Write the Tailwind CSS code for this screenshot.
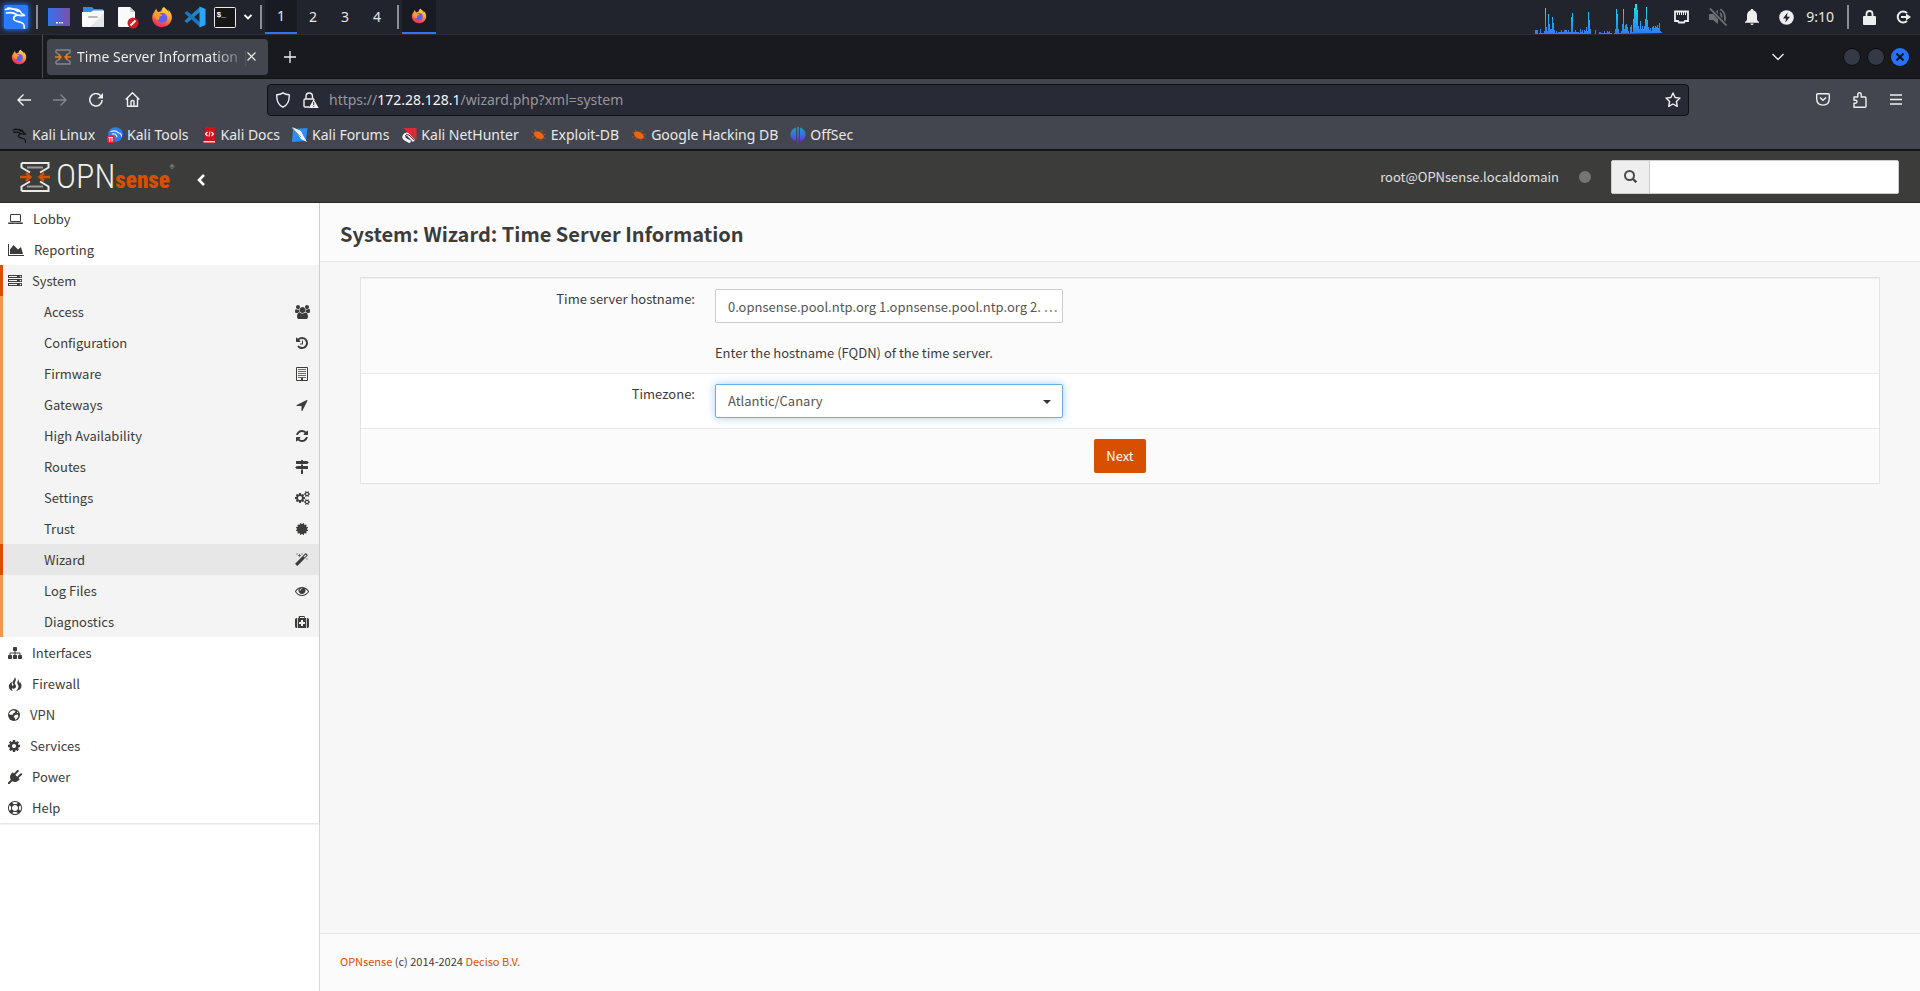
<!DOCTYPE html>
<html lang="en">
<head>
<meta charset="utf-8">
<meta name="viewport" content="width=device-width, initial-scale=1">
<title>Time Server Information | Wizard | System | OPNsense.localdomain</title>
<script src="https://cdn.jsdelivr.net/npm/@tailwindcss/browser@4"></script>
</head>
<body class="flex min-h-screen flex-col bg-[#f7f7f7] font-['Noto_Sans','Open_Sans',sans-serif] text-sm text-[#e8e8e8]">

<!-- Shared symbols -->
<svg class="absolute h-0 w-0" aria-hidden="true">
  <defs>
    <linearGradient id="ffOuter" x1="0.7" y1="0" x2="0.3" y2="1"><stop offset="0" stop-color="#ffe14d"/><stop offset="0.45" stop-color="#ff9a2e"/><stop offset="0.8" stop-color="#ff4050"/><stop offset="1" stop-color="#e62a70"/></linearGradient>
    <linearGradient id="ffGlobe" x1="0" y1="0" x2="0" y2="1"><stop offset="0" stop-color="#7a52e8"/><stop offset="1" stop-color="#4a6cf5"/></linearGradient>
    <linearGradient id="deskGrad" x1="0" y1="0" x2="1" y2="0"><stop offset="0" stop-color="#3574f0"/><stop offset="1" stop-color="#7a4fa8"/></linearGradient>
    <linearGradient id="offGrad" x1="0" y1="0" x2="0" y2="1"><stop offset="0" stop-color="#18a4c0"/><stop offset="0.5" stop-color="#3a6fe0"/><stop offset="1" stop-color="#7420d8"/></linearGradient>
    <linearGradient id="cpuGrad" gradientUnits="userSpaceOnUse" x1="0" y1="0" x2="0" y2="31"><stop offset="0" stop-color="#10f0e0"/><stop offset="1" stop-color="#2f78ff"/></linearGradient>
  </defs>
  <symbol id="firefox" viewBox="0 0 24 24">
    <path d="M21.500 7.500C20.800 6 19.600 4.600 18.500 4c.7 1.200 1 2.200 1.100 3C18 3.600 15.200 2.700 14.200 1c-1.800 1-2.900 3-3 4.600-1.200.1-2.200.5-3.100 1.100C6.800 6.200 6 4.500 6 3c-1.200.8-1.900 2.200-2.200 3.400C2.200 8 1.300 10.300 1.300 12.500 1.300 18.600 6.100 23 12 23s10.800-4.700 10.800-10.700c0-1.800-.5-3.500-1.300-4.800z" fill="url(#ffOuter)"/>
    <circle cx="12.300" cy="13" r="5.400" fill="url(#ffGlobe)"/>
    <path d="M3.500 9.500c2-1.500 4.500-1.800 6.500-.8.700.4 2.500.5 2.500 1.100 0 1-2.800 1.200-3.200 2-.4 1 .3 2.400-.8 3.200C6 15 3.600 12.500 3.500 9.500z" fill="#ff9a2e"/>
  </symbol>
  <symbol id="dragon" viewBox="0 0 24 24">
    <path d="M1.500 4.500c5-1.700 9.500-.8 12.500 1.800M2.500 8c4-.7 7.500-.3 10 1.500M11 4c3 .3 5.500 2 6.500 4.500l3 2-3.500.2c-3.500-1.500-7.500.2-7.300 3 .2 3.300 6.800 2.300 9.300 4.800 1.200 1.200 1.500 2.500 1.200 4.500M4 3l4 .5" fill="none" stroke="currentColor" stroke-width="1.700" stroke-linecap="round" stroke-linejoin="round"/>
  </symbol>
  <symbol id="bug" viewBox="0 0 16 16">
    <path d="M3.500 5C6 4 9 4.500 11 6.500c1.300 1.300 2.300 3 1.800 4.200-1 1.800-5.300 1.700-7.500-.2C3.300 9 2.300 6.500 3.500 5z" fill="#f0640f"/>
    <path d="M2.500 6.500L1 4.500M5 5L4 2.500M9 5.500l3-2.500M12 8l3-1M3.500 9L1 10.500M6 11l-2.500 2M9.500 11.500l.5 2.500M13 10.500l2 1.500" stroke="#b5571d" stroke-width=".8" fill="none"/>
  </symbol>
  <symbol id="opn-mark" viewBox="0 0 30 30">
    <path d="M1.500 1h27v4.500L20 10.500M1.500 1v4.500L10 10.500M1.500 29h27v-4.500L20 19.500M1.500 29v-4.500L10 19.500" fill="none" stroke="#e9e9e9" stroke-width="2"/>
    <path d="M7 5.500h16M7 24.500h16" stroke="#9a9a99" stroke-width="2"/>
    <path d="M0 15h9M6 11l4.500 4L6 19M30 15h-9M24 11l-4.500 4 4.500 4" fill="none" stroke="#d94f00" stroke-width="2.400"/>
  </symbol>
  <symbol id="opn-tab" viewBox="0 0 16 16">
    <path d="M1 1h14v2.500L11 6M1 1v2.500L5 6M1 15h14v-2.500L11 10M1 15v-2.500L5 10" fill="none" stroke="#85878b" stroke-width="1.400"/>
    <path d="M0 8h5M3.500 5.500L6 8l-2.500 2.500M16 8h-5M12.500 5.500L10 8l2.500 2.500" fill="none" stroke="#f07a10" stroke-width="1.500"/>
  </symbol>
</svg>

<!-- Desktop panel -->
<header class="flex h-[35px] shrink-0 items-center justify-between border-b border-[#2b2c34] bg-[#22242d] pl-1">
  <div class="flex h-full items-center">
    <button type="button" aria-label="Applications" class="flex h-6 w-6 items-center justify-center rounded-xs bg-[#2a7bff] text-white shadow-[0_0_5px_1px_#1f6bf0]"><svg class="h-6 w-6"><use href="#dragon"/></svg></button>
    <span class="ml-2 h-6 w-0.5 bg-[#8d8e92]"></span>
    <button type="button" aria-label="Show desktop" class="ml-2.5"><svg class="h-[18px] w-[22px]" viewBox="0 0 22 18"><path fill="url(#deskGrad)" d="M0 0h22v18H0z"/><path d="M8 14h2v1.500H8zM11 14h1.500v1.500H11zM13.500 14H15v1.500h-1.500z" fill="#fff"/></svg></button>
    <button type="button" aria-label="File manager" class="ml-3"><svg class="h-5 w-[22px]" viewBox="0 0 22 20"><path d="M1 0h9l2 2h9v5H1z" fill="#3b83ee"/><path d="M0 5h9l2-1.500h11V19q0 1-1 1H1q-1 0-1-1z" fill="#fafafa"/><path d="M22 6v13q0 1-1 1H8z" fill="#e6e6e6"/><rect x="6" y="9" width="10" height="2" rx="1" fill="#b9b9b9"/></svg></button>
    <button type="button" aria-label="Text editor" class="ml-3.5"><svg class="h-6 w-[21px]" viewBox="0 0 21 24"><path d="M1 2h11l5 5v15H1q-1 0-1-1V3q0-1 1-1z" fill="#fafafa"/><path d="M12 2v5h5z" fill="#cfcfcf"/><circle cx="15" cy="18" r="5.500" fill="#d61b22"/><path d="M12.500 20.500l5-5" stroke="#fff" stroke-width="1.800"/></svg></button>
    <button type="button" aria-label="Firefox" class="ml-3"><svg class="h-[22px] w-[22px]"><use href="#firefox"/></svg></button>
    <button type="button" aria-label="Code editor" class="ml-[11px]"><svg class="h-[22px] w-[22px]" viewBox="0 0 22 22"><path d="M16 1L2 13.500 0.500 15 3 17 16 6z" fill="#1d85d0"/><path d="M16 21L2 8.500 0.500 7 3 5 16 16z" fill="#1678c2"/><path d="M15.500 0.500L21.500 3v16l-6 2.500z" fill="#2ea3f2"/></svg></button>
    <button type="button" aria-label="Terminal" class="ml-2"><svg class="h-[21px] w-[22px]" viewBox="0 0 22 21"><rect x=".5" y=".5" width="21" height="20" rx="1" fill="#161616" stroke="#ececec"/><text x="2.500" y="10" font-family="Liberation Mono" font-size="8" font-weight="700" fill="#fff">$_</text></svg></button>
    <button type="button" aria-label="More terminals" class="ml-2"><svg class="h-2 w-2" viewBox="0 0 8 8" fill="none" stroke="#fff" stroke-width="1.800"><path d="M.5 2L4 5.500 7.500 2"/></svg></button>
    <span class="ml-2 h-6 w-0.5 bg-[#8d8e92]"></span>
    <nav aria-label="Workspaces" class="ml-[3px] flex h-full">
      <button type="button" class="h-full w-8 border-b-2 border-[#2f74f0] bg-[#191b22]">1</button>
      <button type="button" class="w-8">2</button>
      <button type="button" class="w-8">3</button>
      <button type="button" class="w-8">4</button>
    </nav>
    <span class="ml-1 h-6 w-0.5 bg-[#8d8e92]"></span>
    <button type="button" aria-label="Firefox window" class="ml-[3px] flex h-full w-[34px] items-center justify-center border-b-2 border-[#2f74f0] bg-[#191b22]"><svg class="h-4 w-4"><use href="#firefox"/></svg></button>
  </div>
  <div class="flex h-full items-center">
    <svg class="mt-[3px] h-[31px] w-32 self-start" viewBox="0 0 128 31" aria-label="CPU graph" fill="url(#cpuGrad)"><path d="M0 31V27h3v4zM4 31v-1h1v-4h1v4h3v-2h1V5h1v19h1v4h1V11h1v10h1v5h2V14h1v6h1v7h1v3h1v-2h1v2h1v-1h3v-2h1v2h2v-2h3v2h1v-2h1v-4h0v6h2V14h1v-4h1v19h2v-2h1v2h3v1h1v-4h1v3h1v-2h1v3h1v-3h1v1h1v-4h1v4h1V9h1v8h1v9h1v5zM60 31v-4h1v4zM64 31v-2h2v1h3v-2h1v2h2v-2h1v1h1v-1h1v2h2v1zM79 31v-1h1v-4h1V6h1v5h1v15h1v4h2v-2h1V21h1V6h1v20h1v-4h1v-1h1v3h1v4h1v2h1v-6h1v-2h1v7h1V16h1V5h1V1h1v0h1v6h1v16h1v3h1v-8h1v8h1v-3h1v3h1v-3h1v-7h1V4h1v13h1v7h1v3h1v-2h1v3h1v-4h1v-1h1v2h1v-2h1v1h1v-2h1v3h1v-5h1v8h1v1h1v1z"/></svg>
    <button type="button" aria-label="Network" class="ml-[11px]"><svg class="h-[14px] w-[15px]" viewBox="0 0 15 14"><path d="M1 1.500h13v9.500h-3l-1 1.500H5L4 11H1z" fill="none" stroke="#eee" stroke-width="1.800"/><path d="M3.500 2v3M5.500 2v3M7.500 2v3M9.500 2v3M11.500 2v3" stroke="#eee"/></svg></button>
    <button type="button" aria-label="Volume muted" class="ml-5"><svg class="h-[18px] w-[18px]" viewBox="0 0 18 18" fill="none" stroke="#6f7076"><path d="M0 6h4l5-4v14l-5-4H0z" fill="#6f7076" stroke="none"/><path d="M11 5c2 1.500 2 6 0 8M11 1.500c6 2 6 11 3 14" stroke-width="1.800"/><path d="M1 0l16.500 17.500" stroke="#22242d" stroke-width="3.500"/><path d="M1 .5l16.500 17" stroke-width="1.800"/></svg></button>
    <button type="button" aria-label="Notifications" class="ml-[18px]"><svg class="h-4 w-[14px]" viewBox="0 0 14 16" fill="#eee"><path d="M7 0c1 0 1.300.6 1.300 1.300C10.800 2 12 4 12 6.500V11l2 2v.7H0V13l2-2V6.500C2 4 3.200 2 5.700 1.300 5.700.6 6 0 7 0zM5.500 14.500h3Q8.500 16 7 16t-1.500-1.500z"/></svg></button>
    <button type="button" aria-label="Power manager" class="ml-5"><svg class="h-[15px] w-[15px]" viewBox="0 0 15 15"><circle cx="7.500" cy="7.500" r="7.300" fill="#eee"/><path d="M8.500 2.500l-4.500 6h3l-.7 4L11 6.700H8z" fill="#22242d"/></svg></button>
    <time class="ml-3">9:10</time>
    <span class="ml-[13px] h-6 w-0.5 bg-[#8d8e92]"></span>
    <button type="button" aria-label="Lock screen" class="ml-[14px]"><svg class="h-[15px] w-[13px]" viewBox="0 0 13 15"><path d="M3.500 7V4q0-3 3-3t3 3v3" fill="none" stroke="#eee" stroke-width="1.800"/><rect y="6" width="13" height="9" rx="1" fill="#eee"/></svg></button>
    <button type="button" aria-label="Log out" class="mr-[9px] ml-5"><svg class="h-[14px] w-[15px]" viewBox="0 0 15 14" fill="none" stroke="#eee" stroke-width="2"><path d="M11 3A5.500 5.500 0 1 0 11 11M5 7h7"/><path d="M10 3.500L15 7l-5 3.500z" fill="#eee" stroke="none"/></svg></button>
  </div>
</header>

<!-- Browser tabs -->
<div class="flex h-11 shrink-0 items-center border-b border-[#111216] bg-[#191a1f]">
  <button type="button" aria-label="Firefox View" class="flex h-full w-[43px] items-center justify-center border-r border-[#4a4b50] pr-1"><svg class="h-4 w-4"><use href="#firefox"/></svg></button>
  <div class="ml-1 flex h-9 w-[221px] items-center rounded-sm bg-[#43464e] pl-2 text-[#f2f2f2]">
    <svg class="h-4 w-4 shrink-0"><use href="#opn-tab"/></svg>
    <span class="ml-1.5 w-[169px] bg-linear-to-r from-[#f2f2f2] from-80% to-[#55575e] bg-clip-text whitespace-nowrap text-transparent">Time Server Information |</span>
    <button type="button" aria-label="Close tab" class="ml-px"><svg class="h-[9px] w-[9px]" viewBox="0 0 9 9" stroke="#e8e8e8" stroke-width="1.200"><path d="M.5.5l8 8M8.500.5l-8 8"/></svg></button>
  </div>
  <button type="button" aria-label="New tab" class="ml-4"><svg class="h-3 w-3" viewBox="0 0 12 12" stroke="#f2f2f2" stroke-width="1.300"><path d="M6 0v12M0 6h12"/></svg></button>
  <button type="button" aria-label="List all tabs" class="mr-[59px] ml-auto"><svg class="h-2 w-3" viewBox="0 0 12 8" fill="none" stroke="#e8e8e8" stroke-width="1.400"><path d="M.5 1L6 6.500 11.500 1"/></svg></button>
  <div class="mr-[11px] flex items-center gap-1.5">
    <button type="button" aria-label="Minimize" class="h-[18px] w-[18px] rounded-full border border-[#0b0c0f] bg-[#343945]"></button>
    <button type="button" aria-label="Maximize" class="h-[18px] w-[18px] rounded-full border border-[#0b0c0f] bg-[#343945]"></button>
    <button type="button" aria-label="Close window" class="flex h-[18px] w-[18px] items-center justify-center rounded-full bg-[#2672f5]"><svg class="h-2 w-2" viewBox="0 0 8 8" stroke="#10131c" stroke-width="2"><path d="M.5.5l7 7M7.500.5l-7 7"/></svg></button>
  </div>
</div>

<!-- Navigation toolbar -->
<div class="flex h-[41px] shrink-0 items-center bg-[#43464e]">
  <div class="flex w-[267px] shrink-0 items-center gap-[22px] pl-[17px]">
    <button type="button" aria-label="Back"><svg class="h-[14px] w-[14px]" viewBox="0 0 14 14" fill="none" stroke="#f0f0f0" stroke-width="1.400"><path d="M14 7H1M6.500 1.500L1 7l5.500 5.500"/></svg></button>
    <button type="button" aria-label="Forward" disabled><svg class="h-[14px] w-[14px]" viewBox="0 0 14 14" fill="none" stroke="#85878c" stroke-width="1.400"><path d="M0 7h13M7.500 1.500L13 7l-5.500 5.500"/></svg></button>
    <button type="button" aria-label="Reload"><svg class="h-[14px] w-[14px]" viewBox="0 0 14 14" fill="none" stroke="#f0f0f0" stroke-width="1.500"><path d="M11.500 2.500A6.200 6.200 0 1 0 13.200 7"/><path d="M14 0v5.500H8.500z" fill="#f0f0f0" stroke="none"/></svg></button>
    <button type="button" aria-label="Home"><svg class="h-[15px] w-[15px]" viewBox="0 0 15 15" fill="none" stroke="#f0f0f0" stroke-width="1.400" stroke-linejoin="round"><path d="M.7 7.500l6.800-6.800 6.800 6.800M2.500 6v8.300h10V6M6 14v-4.500q0-1 1.500-1T9 9.500V14"/></svg></button>
  </div>
  <div class="flex h-8 min-w-0 flex-1 items-center rounded-sm border border-[#0e0f13] bg-[#282a35] pr-[7px] pl-2">
    <svg class="h-4 w-[14px] shrink-0" viewBox="0 0 14 16" fill="none" stroke="#f0f0f0" stroke-width="1.400"><path d="M7 .8q2.500 1.700 6.200 2C13.600 9 11.500 13 7 15.200 2.500 13 .4 9 .8 2.800 4.500 2.500 7 .8 7 .8z"/></svg>
    <svg class="ml-[13px] h-4 w-4 shrink-0" viewBox="0 0 16 16"><path d="M3 7V4.500Q3 1 6.200 1T9.500 4.500V7M6 15H2.300Q1 15 1 13.800V8.200Q1 7 2.300 7h8Q11 7 11 8" fill="none" stroke="#f0f0f0" stroke-width="1.400"/><path d="M10.700 7.300l5 8.700H5.700z" fill="#f0f0f0"/><path d="M10.200 10h1v3h-1zM10.200 13.800h1v1h-1z" fill="#282a35"/></svg>
    <div role="textbox" aria-label="Address" class="ml-2.5 flex-1 text-[#96979c]">https://<span class="text-[#f5f5f5]">172.28.128.1</span>/wizard.php?xml=system</div>
    <button type="button" aria-label="Bookmark this page"><svg class="h-4 w-4" viewBox="0 0 16 16" fill="none" stroke="#f0f0f0" stroke-width="1.400" stroke-linejoin="round"><path d="M8 1l2.100 4.500 4.900.6-3.600 3.400.9 4.900L8 12l-4.300 2.400.9-4.900L1 6.100l4.900-.6z"/></svg></button>
  </div>
  <div class="flex w-[231px] shrink-0 items-center justify-end gap-[23px] pr-[18px]">
    <button type="button" aria-label="Pocket"><svg class="h-[13px] w-[14px]" viewBox="0 0 14 13" fill="none" stroke="#f0f0f0" stroke-width="1.400"><path d="M1.700.8h10.600q1 0 1 1v4q0 6.300-6.300 6.300T.7 5.800v-4q0-1 1-1z"/><path d="M4 4.500l3 2.800 3-2.800"/></svg></button>
    <button type="button" aria-label="Extensions"><svg class="h-4 w-[14px]" viewBox="0 0 14 16" fill="none" stroke="#f0f0f0" stroke-width="1.400" stroke-linejoin="round"><path d="M1 5h3.800V2.500q0-1.700 1.700-1.700t1.700 1.700V5H12q1 0 1 1v8q0 1.200-1 1.200H1v-4h1.500q1.500 0 1.500-1.400T2.500 8.300H1z"/></svg></button>
    <button type="button" aria-label="Menu"><svg class="h-[11px] w-3" viewBox="0 0 12 11" stroke="#f0f0f0" stroke-width="1.400"><path d="M0 1h12M0 5.500h12M0 10h12"/></svg></button>
  </div>
</div>

<!-- Bookmarks bar -->
<nav aria-label="Bookmarks" class="flex h-[31px] shrink-0 items-center gap-3 border-b-2 border-[#141517] bg-[#43464e] pl-3 whitespace-nowrap">
  <a href="#" class="flex items-center gap-1"><svg class="h-4 w-4 text-[#101010]"><use href="#dragon"/></svg>Kali Linux</a>
  <a href="#" class="flex items-center gap-1"><svg class="h-4 w-4" viewBox="0 0 16 16"><circle cx="8.500" cy="7.500" r="7.300" fill="#2f7df5"/><path d="M3.500 4.500q5-2 8 1.500 3 0 3 3.500M5 7q4-1 5 3" fill="none" stroke="#dfeaff" stroke-width="1.200"/><rect y="8.500" width="7.500" height="7.500" rx="2" fill="#e32636"/><path d="M1.500 10.500h4.500M2.700 10.500v4M5 10.500v4" stroke="#fff"/></svg>Kali Tools</a>
  <a href="#" class="flex items-center gap-1"><svg class="h-4 w-4" viewBox="0 0 16 16"><path d="M2 0h12v16H2z" fill="#d41116"/><path d="M2 0h1.500v16H2z" fill="#3d3a6c"/><path d="M2.500 14H14v1.500H2.500z" fill="#f4d3d3"/><path d="M6.500 5l-2 2 2 2M10.500 5l2 2-2 2M9 4.500l-1 5" fill="none" stroke="#fff" stroke-width="1.100"/></svg>Kali Docs</a>
  <a href="#" class="flex items-center gap-1"><svg class="h-4 w-4" viewBox="0 0 16 16"><path d="M1 2l14.500-1L14 14 0 15z" fill="#2b8df5"/><path d="M0 0l9 4 3 6 3 5-6-3-4-6z" fill="#f2f5f8"/><path d="M0 1l9 9" stroke="#8f979e" stroke-width=".8"/></svg>Kali Forums</a>
  <a href="#" class="flex items-center gap-1"><svg class="h-4 w-4" viewBox="0 0 16 16"><path d="M2 1h13.500v12z" fill="#e32636"/><path d="M13 14L7.500 8Q5 6 3.300 8.500T5.500 13l4 2" fill="none" stroke="#f4f4f4" stroke-width="3"/><path d="M13 13L8 8Q5.500 6.500 4 9" fill="none" stroke="#a51724" stroke-width="1"/></svg>Kali NetHunter</a>
  <a href="#" class="flex items-center gap-1"><svg class="h-4 w-4"><use href="#bug"/></svg>Exploit-DB</a>
  <a href="#" class="flex items-center gap-1"><svg class="h-4 w-4"><use href="#bug"/></svg>Google Hacking DB</a>
  <a href="#" class="flex items-center gap-1"><svg class="h-4 w-4" viewBox="0 0 16 16" fill="url(#offGrad)"><path d="M6 .5v14Q.5 12.500.5 7.500T6 .5zM10 .5v14q5.500-2 5.500-7T10 .5zM7.200 0h1.600v16H7.200z"/></svg>OffSec</a>
</nav>

<!-- OPNsense page -->
<div class="flex flex-1 flex-col font-['Noto_Sans_CJK_SC','Open_Sans',sans-serif] text-[13px]/5 text-[#3c3c3b]">
  <header class="flex h-[52px] shrink-0 items-center justify-between border-b border-[#2a2a29] bg-[#3c3c3b] pr-[21px] pl-5">
    <div class="flex items-center">
      <a href="#" aria-label="OPNsense" class="flex items-center gap-1.5 font-['Roboto_Condensed','Roboto',sans-serif]">
        <svg class="h-[30px] w-[30px]"><use href="#opn-mark"/></svg>
        <span class="flex items-baseline pt-1"><span class="text-[34px]/8 font-light text-[#efefef]">OPN</span><span class="text-[23px]/8 font-black text-[#d94f00]">sense</span><sup class="self-start text-[6px]/5 text-[#aaaaaa]">®</sup></span>
      </a>
      <button type="button" aria-label="Toggle sidebar" class="mt-1.5 ml-[22px]"><svg class="h-3 w-2" viewBox="0 0 8 12" fill="none" stroke="#fff" stroke-width="2.600"><path d="M7 1L2 6l5 5"/></svg></button>
    </div>
    <div class="flex items-center">
      <span class="text-[#e0e0e0]">root@OPNsense.localdomain</span>
      <span class="mx-5 h-3 w-3 rounded-full bg-[#757575]"></span>
      <form role="search" class="flex h-[34px] w-72 overflow-hidden rounded-xs border border-[#cccccc] bg-white">
        <label for="search" class="flex w-[38px] shrink-0 items-center justify-center border-r border-[#cccccc] bg-[#eeeeee]"><svg class="h-[13px] w-[13px]" viewBox="0 0 13 13" fill="none" stroke="#4a4a4a" stroke-width="2"><circle cx="5.500" cy="5.500" r="4.500"/><path d="M9 9l3.300 3.300" stroke-width="2.400"/></svg></label>
        <input id="search" type="search" aria-label="Search" class="min-w-0 flex-1 px-3 outline-none">
      </form>
    </div>
  </header>

  <div class="flex flex-1">
    <aside class="w-80 shrink-0 border-r border-[#d9d9d9] bg-white">
      <nav aria-label="Main menu" class="shadow-[0_1px_2px_#00000026]">
        <a href="#" class="flex h-[31px] items-center gap-2.5 pl-2"><svg class="h-[14px] w-[15px]" viewBox="0 0 1920 1792" fill="currentColor"><path d="M416 1280q-66 0-113-47t-47-113v-704q0-66 47-113t113-47h1088q66 0 113 47t47 113v704q0 66-47 113t-113 47h-1088zm-32-864v704q0 13 9.500 22.500t22.500 9.500h1088q13 0 22.500-9.500t9.500-22.500v-704q0-13-9.500-22.500t-22.500-9.500h-1088q-13 0-22.500 9.500t-9.500 22.500zm1376 928h160v96q0 40-47 68t-113 28h-1600q-66 0-113-28t-47-68v-96h1760zm-720 96q16 0 16-16t-16-16h-160q-16 0-16 16t16 16h160z"/></svg>Lobby</a>
        <a href="#" class="flex h-[31px] items-center gap-2.5 pl-2"><svg class="h-[14px] w-4" viewBox="0 0 2048 1792" fill="currentColor"><path d="M2048 1536v128h-2048v-1536h128v1408h1920zm-384-1024l256 896h-1664v-576l448-576 576 576z"/></svg>Reporting</a>
        <a href="#" class="flex h-[31px] items-center gap-2.5 border-l-3 border-[#d94f00] bg-[#f4f4f4] pl-[5px]"><svg class="h-[14px] w-[14px]" viewBox="0 0 1792 1792" fill="currentColor"><path d="M128 1408h1024v-128h-1024v128zm0-512h1024v-128h-1024v128zm1568 448q0-40-28-68t-68-28-68 28-28 68 28 68 68 28 68-28 28-68zm-1568-960h1024v-128h-1024v128zm1568 448q0-40-28-68t-68-28-68 28-28 68 28 68 68 28 68-28 28-68zm0-512q0-40-28-68t-68-28-68 28-28 68 28 68 68 28 68-28 28-68zm96 832v384h-1792v-384h1792zm0-512v384h-1792v-384h1792zm0-512v384h-1792v-384h1792z"/></svg>System</a>
        <div class="bg-[#f4f4f4]">
          <a href="#" class="flex h-[31px] items-center justify-between border-l-3 border-[#f0984f] pr-2 pl-[41px]">Access<span class="flex w-[18px] justify-center"><svg class="h-[14px] w-[15px]" viewBox="0 0 1920 1792" fill="currentColor"><path d="M593 896q-162 5-265 128h-134q-82 0-138-40.500t-56-118.500q0-353 124-353 6 0 43.500 21t97.500 42.500 119 21.500q67 0 133-23-5 37-5 66 0 159 93 293zm1071 637q0 120-73 189.500t-194 69.500h-874q-121 0-194-69.500t-73-189.500q0-53 3.500-103.500t14-109 26.500-108.500 43-97.500 62-81 85.500-53.500 111.500-20q10 0 43 21.500t73 48 107 48 135 21.500 135-21.500 107-48 73-48 43-21.500q61 0 111.500 20t85.500 53.500 62 81 43 97.500 26.500 108.500 14 109 3.500 103.500zm-1024-1277q0 106-75 181t-181 75-181-75-75-181 75-181 181-75 181 75 75 181zm704 384q0 159-112.500 271.500t-271.500 112.500-271.500-112.500-112.500-271.500 112.500-271.500 271.500-112.500 271.500 112.500 112.500 271.500zm576 225q0 78-56 118.500t-138 40.500h-134q-103-123-265-128 93-134 93-293 0-29-5-66 66 23 133 23 59 0 119-21.500t97.500-42.500 43.500-21q124 0 124 353zm-128-609q0 106-75 181t-181 75-181-75-75-181 75-181 181-75 181 75 75 181z"/></svg></span></a>
          <a href="#" class="flex h-[31px] items-center justify-between border-l-3 border-[#f0984f] pr-2 pl-[41px]">Configuration<span class="flex w-[18px] justify-center"><svg class="h-[14px] w-[14px]" viewBox="0 0 1792 1792" fill="currentColor"><path d="M1664 896q0 156-61 298t-164 245-245 164-298 61q-172 0-327-72.500t-264-204.500q-7-10-6.500-22.500t8.500-20.500l137-138q10-9 25-9 16 2 23 12 73 95 179 147t225 52q104 0 198.500-40.500t163.500-109.500 109.500-163.500 40.500-198.500-40.500-198.500-109.500-163.500-163.500-109.500-198.500-40.500q-98 0-188 35.500t-160 101.500l137 138q31 30 14 69-17 40-59 40h-448q-26 0-45-19t-19-45v-448q0-42 40-59 39-17 69 14l130 129q107-101 244.500-156.500t284.500-55.500q156 0 298 61t245 164 164 245 61 298zm-640-288v448q0 14-9 23t-23 9h-320q-14 0-23-9t-9-23v-64q0-14 9-23t23-9h224v-352q0-14 9-23t23-9h64q14 0 23 9t9 23z"/></svg></span></a>
          <a href="#" class="flex h-[31px] items-center justify-between border-l-3 border-[#f0984f] pr-2 pl-[41px]">Firmware<span class="flex w-[18px] justify-center"><svg class="h-[14px] w-3" viewBox="0 0 12 14" fill="none" stroke="currentColor"><path d="M.5.500h11v13H.5z"/><path d="M2 2.500h8M2 4.500h8M2 6.500h8M2 8.500h8M2 10.500h8" stroke-opacity=".75"/><path d="M5 11h2v3H5z" fill="currentColor" stroke="none"/></svg></span></a>
          <a href="#" class="flex h-[31px] items-center justify-between border-l-3 border-[#f0984f] pr-2 pl-[41px]">Gateways<span class="flex w-[18px] justify-center"><svg class="h-[14px] w-[14px]" viewBox="0 0 1792 1792" fill="currentColor"><path d="M1593 349l-640 1280q-17 35-57 35-5 0-15-2-22-5-35.500-22.500t-13.500-39.500v-576h-576q-22 0-39.500-13.500t-22.500-35.500 4-42 29-30l1280-640q13-7 29-7 27 0 45 19 15 14 18.500 34.500t-6.500 39.500z"/></svg></span></a>
          <a href="#" class="flex h-[31px] items-center justify-between border-l-3 border-[#f0984f] pr-2 pl-[41px]">High Availability<span class="flex w-[18px] justify-center"><svg class="h-[14px] w-[14px]" viewBox="0 0 1792 1792" fill="currentColor"><path d="M1639 1056q0 5-1 7-64 268-268 434.500t-478 166.500q-146 0-282.500-55t-243.500-157l-129 129q-19 19-45 19t-45-19-19-45v-448q0-26 19-45t45-19h448q26 0 45 19t19 45-19 45l-137 137q71 66 161 102t187 36q134 0 250-65t186-179q11-17 53-117 8-23 30-23h192q13 0 22.500 9.500t9.500 22.500zm25-800v448q0 26-19 45t-45 19h-448q-26 0-45-19t-19-45 19-45l138-138q-148-137-349-137-134 0-250 65t-186 179q-11 17-53 117-8 23-30 23h-199q-13 0-22.500-9.500t-9.500-22.500v-7q65-268 270-434.500t480-166.500q146 0 284 55.500t245 156.500l130-129q19-19 45-19t45 19 19 45z"/></svg></span></a>
          <a href="#" class="flex h-[31px] items-center justify-between border-l-3 border-[#f0984f] pr-2 pl-[41px]">Routes<span class="flex w-[18px] justify-center"><svg class="h-[14px] w-[14px]" viewBox="0 0 1792 1792" fill="currentColor"><path d="M1745 297q10 10 10 23t-10 23l-141 141q-28 28-68 28h-1344q-26 0-45-19t-19-45v-256q0-26 19-45t45-19h576v-64q0-26 19-45t45-19h128q26 0 45 19t19 45v64h512q40 0 68 28zm-977 919h256v512q0 26-19 45t-45 19h-128q-26 0-45-19t-19-45v-512zm832-448q26 0 45 19t19 45v256q0 26-19 45t-45 19h-1344q-40 0-68-28l-141-141q-10-10-10-23t10-23l141-141q28-28 68-28h512v-192h256v192h576z"/></svg></span></a>
          <a href="#" class="flex h-[31px] items-center justify-between border-l-3 border-[#f0984f] pr-2 pl-[41px]">Settings<span class="flex w-[18px] justify-center"><svg class="h-[14px] w-[15px]" viewBox="0 0 1920 1792" fill="currentColor"><path d="M896 896q0-106-75-181t-181-75-181 75-75 181 75 181 181 75 181-75 75-181zm768 512q0-52-38-90t-90-38-90 38-38 90q0 53 37.500 90.500t90.500 37.500 90.500-37.500 37.500-90.500zm0-1024q0-52-38-90t-90-38-90 38-38 90q0 53 37.500 90.500t90.500 37.500 90.500-37.500 37.500-90.500zm-384 421v185q0 10-7 19.500t-16 10.500l-155 24q-11 35-32 76 34 48 90 115 7 11 7 20 0 12-7 19-23 30-82.500 89.500t-78.500 59.500q-11 0-21-7l-115-90q-37 19-77 31-11 108-23 155-7 24-30 24h-186q-11 0-20-7.500t-10-17.500l-23-153q-34-10-75-31l-118 89q-7 7-20 7-11 0-21-8-144-133-144-160 0-9 7-19 10-14 41-53t47-61q-23-44-35-82l-152-24q-10-1-17-9.500t-7-19.500v-185q0-10 7-19.500t16-10.500l155-24q11-35 32-76-34-48-90-115-7-11-7-20 0-12 7-20 22-30 82-89t79-59q11 0 21 7l115 90q34-18 77-32 11-108 23-154 7-24 30-24h186q11 0 20 7.500t10 17.500l23 153q34 10 75 31l118-89q8-7 20-7 11 0 21 8 144 133 144 160 0 8-7 19-12 16-42 54t-45 60q23 48 34 82l152 23q10 2 17 10.500t7 19.500zm640 533v140q0 16-149 31-12 27-30 52 51 113 51 138 0 4-4 7-122 71-124 71-8 0-46-47t-52-68q-20 2-30 2t-30-2q-14 21-52 68t-46 47q-2 0-124-71-4-3-4-7 0-25 51-138-18-25-30-52-149-15-149-31v-140q0-16 149-31 13-29 30-52-51-113-51-138 0-4 4-7 4-2 35-20t59-34 30-16q8 0 46 46.500t52 67.500q20-2 30-2t30 2q51-71 92-112l6-2q4 0 124 70 4 3 4 7 0 25-51 138 17 23 30 52 149 15 149 31zm0-1024v140q0 16-149 31-12 27-30 52 51 113 51 138 0 4-4 7-122 71-124 71-8 0-46-47t-52-68q-20 2-30 2t-30-2q-14 21-52 68t-46 47q-2 0-124-71-4-3-4-7 0-25 51-138-18-25-30-52-149-15-149-31v-140q0-16 149-31 13-29 30-52-51-113-51-138 0-4 4-7 4-2 35-20t59-34 30-16q8 0 46 46.500t52 67.500q20-2 30-2t30 2q51-71 92-112l6-2q4 0 124 70 4 3 4 7 0 25-51 138 17 23 30 52 149 15 149 31z"/></svg></span></a>
          <a href="#" class="flex h-[31px] items-center justify-between border-l-3 border-[#f0984f] pr-2 pl-[41px]">Trust<span class="flex w-[18px] justify-center"><svg class="h-[14px] w-[14px]" viewBox="0 0 1792 1792" fill="currentColor"><path d="M1504 896l138 135q30 28 20 70-12 41-52 51l-188 48 53 186q12 41-19 70-29 31-70 19l-186-53-48 188q-10 40-51 52-12 2-19 2-31 0-51-22l-135-138-135 138q-28 30-70 20-41-11-51-52l-48-188-186 53q-41 12-70-19-31-29-19-70l53-186-188-48q-40-10-52-51-10-42 20-70l138-135-138-135q-30-28-20-70 12-41 52-51l188-48-53-186q-12-41 19-70 29-31 70-19l186 53 48-188q10-41 51-51 41-12 70 19l135 139 135-139q29-30 70-19 41 10 51 51l48 188 186-53q41-12 70 19 31 29 19 70l-53 186 188 48q40 10 52 51 10 42-20 70z"/></svg></span></a>
          <a href="#" aria-current="page" class="flex h-[31px] items-center justify-between border-l-3 border-[#d94f00] bg-[#e7e7e7] pr-2 pl-[41px]">Wizard<span class="flex w-[18px] justify-center"><svg class="h-[14px] w-[14px]" viewBox="0 0 1792 1792" fill="currentColor"><path d="M1190 581l293-293-107-107-293 293zm447-293q0 27-18 45l-1286 1286q-18 18-45 18t-45-18l-198-198q-18-18-18-45t18-45l1286-1286q18-18 45-18t45 18l198 198q18 18 18 45zm-1351-190l98 30-98 30-30 98-30-98-98-30 98-30 30-98zm350 162l196 60-196 60-60 196-60-196-196-60 196-60 60-196zm930 478l98 30-98 30-30 98-30-98-98-30 98-30 30-98zm-640-640l98 30-98 30-30 98-30-98-98-30 98-30 30-98z"/></svg></span></a>
          <a href="#" class="flex h-[31px] items-center justify-between border-l-3 border-[#f0984f] pr-2 pl-[41px]">Log Files<span class="flex w-[18px] justify-center"><svg class="h-[14px] w-[14px]" viewBox="0 0 1792 1792" fill="currentColor"><path d="M1664 960q-152-236-381-353 61 104 61 225 0 185-131.500 316.500t-316.500 131.500-316.500-131.500-131.500-316.500q0-121 61-225-229 117-381 353 133 205 333.500 326.500t434.500 121.500 434.500-121.500 333.500-326.500zm-720-384q0-20-14-34t-34-14q-125 0-214.500 89.500t-89.500 214.500q0 20 14 34t34 14 34-14 14-34q0-86 61-147t147-61q20 0 34-14t14-34zm848 384q0 34-20 69-140 230-376.500 368.500t-499.500 138.500-499.500-139-376.500-368q-20-35-20-69t20-69q140-229 376.500-368t499.500-139 499.500 139 376.500 368q20 35 20 69z"/></svg></span></a>
          <a href="#" class="flex h-[31px] items-center justify-between border-l-3 border-[#f0984f] pr-2 pl-[41px]">Diagnostics<span class="flex w-[18px] justify-center"><svg class="h-[14px] w-[14px]" viewBox="0 0 1792 1792" fill="currentColor"><path d="M1280 1120v-192q0-14-9-23t-23-9h-224v-224q0-14-9-23t-23-9h-192q-14 0-23 9t-9 23v224h-224q-14 0-23 9t-9 23v192q0 14 9 23t23 9h224v224q0 14 9 23t23 9h192q14 0 23-9t9-23v-224h224q14 0 23-9t9-23zm-640-736h512v-128h-512v128zm-384 0v1280h-32q-92 0-158-66t-66-158v-832q0-92 66-158t158-66h32zm1184 0v1280h-1088v-1280h128v-160q0-40 28-68t68-28h576q40 0 68 28t28 68v160h128zm352 224v832q0 92-66 158t-158 66h-32v-1280h32q92 0 158 66t66 158z"/></svg></span></a>
        </div>
        <a href="#" class="flex h-[31px] items-center gap-2.5 pl-2"><svg class="h-[14px] w-[14px]" viewBox="0 0 1792 1792" fill="currentColor"><path d="M1792 1248v320q0 40-28 68t-68 28h-320q-40 0-68-28t-28-68v-320q0-40 28-68t68-28h96v-192h-512v192h96q40 0 68 28t28 68v320q0 40-28 68t-68 28h-320q-40 0-68-28t-28-68v-320q0-40 28-68t68-28h96v-192h-512v192h96q40 0 68 28t28 68v320q0 40-28 68t-68 28h-320q-40 0-68-28t-28-68v-320q0-40 28-68t68-28h96v-192q0-52 38-90t90-38h512v-192h-96q-40 0-68-28t-28-68v-320q0-40 28-68t68-28h320q40 0 68 28t28 68v320q0 40-28 68t-68 28h-96v192h512q52 0 90 38t38 90v192h96q40 0 68 28t28 68z"/></svg>Interfaces</a>
        <a href="#" class="flex h-[31px] items-center gap-2.5 pl-2"><svg class="h-[14px] w-[14px]" viewBox="0 0 14 14" fill="currentColor"><path d="M6.500 0C7.500 2 4.500 3.500 4.500 5.500c0 1.200 1 1.500 1 2.500 0 .8-1 1-1.400.2C3.700 7.300 3.800 6.300 4 5 2 6 .8 7.500.8 9.500.8 12 2.500 13.700 5 14c-1-1-1.300-2-1-3 .8 1 2.300.8 3.300 0C8.700 9.800 8 8.500 7.300 7.500 6.600 6.300 6.600 5.500 7.300 4.500 8.300 3 8 1 6.500 0z"/><path d="M10 2c.5 1.500-.8 2.500-.8 3.700 0 1.300 1.300 2 1.300 3.800 0 1.700-1.200 3.200-2.500 4.500 3.500-.5 5.500-2.500 5.500-5.200 0-2-1-3.300-2-4.300.2 1 .2 1.700-.1 2C10.500 5.500 11.500 3.500 10 2z"/></svg>Firewall</a>
        <a href="#" class="flex h-[31px] items-center gap-2.5 pl-2"><svg class="h-3 w-3" viewBox="0 0 12 12"><circle cx="6" cy="6" r="6" fill="currentColor"/><path d="M3 2l2.500-.8L7.500 2 6.500 4 5 4.500 4.500 6 3 5.500 2 6 1 4.500zM7 6l2.500-.5 1 1.500-1.500 2.500L7.500 11 7 9 5.500 8zM9 2.500l1.500 1.500H9z" fill="#fff"/></svg>VPN</a>
        <a href="#" class="flex h-[31px] items-center gap-2.5 pl-2"><svg class="h-3 w-3" viewBox="128 128 1536 1536" fill="currentColor"><path d="M1152 896q0-106-75-181t-181-75-181 75-75 181 75 181 181 75 181-75 75-181zm512-109v222q0 12-8 23t-20 13l-185 28q-19 54-39 91 35 50 107 138 10 12 10 25t-9 23q-27 37-99 108t-94 71q-12 0-26-9l-138-108q-44 23-91 38-16 136-29 186-7 28-36 28h-222q-14 0-24.500-8.500t-11.500-21.500l-28-184q-49-16-90-37l-141 107q-10 9-25 9-14 0-25-11-126-114-165-168-7-10-7-23 0-12 8-23 15-21 51-66.500t54-70.500q-27-50-41-99l-183-27q-13-2-21-12.500t-8-23.500v-222q0-12 8-23t19-13l186-28q14-46 39-92-40-57-107-138-10-12-10-24 0-10 9-23 26-36 98.500-107.500t94.500-71.500q13 0 26 10l138 107q44-23 91-38 16-136 29-186 7-28 36-28h222q14 0 24.500 8.500t11.500 21.500l28 184q49 16 90 37l142-107q9-9 24-9 13 0 25 10 129 119 165 170 7 8 7 22 0 12-8 23-15 21-51 66.500t-54 70.500q26 50 41 98l183 28q13 2 21 12.500t8 23.500z"/></svg>Services</a>
        <a href="#" class="flex h-[31px] items-center gap-2.5 pl-2"><svg class="h-[14px] w-[14px]" viewBox="0 0 1792 1792" fill="currentColor"><path d="M1755 453q37 38 37 90.500t-37 90.500l-401 400 150 150-160 160q-163 163-389.500 186.500t-411.500-100.500l-362 362h-181v-181l362-362q-124-185-100.500-411.500t186.500-389.500l160-160 150 150 400-401q38-37 91-37t90 37 37 90.500-37 90.500l-400 401 234 234 401-400q38-37 91-37t90 37z"/></svg>Power</a>
        <a href="#" class="flex h-[31px] items-center gap-2.5 pl-2"><svg class="h-[14px] w-[14px]" viewBox="0 0 1792 1792" fill="currentColor"><path d="M896 0q182 0 348 71t286 191 191 286 71 348-71 348-191 286-286 191-348 71-348-71-286-191-191-286-71-348 71-348 191-286 286-191 348-71zm0 128q-190 0-361 90l194 194q82-28 167-28t167 28l194-194q-171-90-361-90zm-678 1129l194-194q-28-82-28-167t28-167l-194-194q-90 171-90 361t90 361zm678 407q190 0 361-90l-194-194q-82 28-167 28t-167-28l-194 194q171 90 361 90zm0-384q159 0 271.500-112.500t112.500-271.500-112.500-271.500-271.500-112.500-271.500 112.500-112.500 271.500 112.500 271.500 271.500 112.500zm484-217l194 194q90-171 90-361t-90-361l-194 194q28 82 28 167t-28 167z"/></svg>Help</a>
      </nav>
    </aside>

    <div class="flex min-w-0 flex-1 flex-col">
      <div class="flex h-[59px] items-center border-b border-[#e6e6e6] bg-[#fbfbfb] px-5 pt-1">
        <h1 class="text-xl font-semibold">System: Wizard: Time Server Information</h1>
      </div>
      <main class="flex-1 px-10 pt-[15px]">
        <form class="border border-[#e3e3e3] bg-[#fbfbfb]">
          <div class="flex gap-5 border-t border-[#ededed] py-2.5">
            <label for="hostname" class="w-[22%] shrink-0 text-right">Time server hostname:</label>
            <div>
              <input id="hostname" type="text" value="0.opnsense.pool.ntp.org 1.opnsense.pool.ntp.org 2. …" class="h-[34px] w-[348px] rounded-xs border border-[#cccccc] bg-white pr-1 pl-3 text-[#555555] outline-none">
              <p class="mt-5">Enter the hostname (FQDN) of the time server.</p>
            </div>
          </div>
          <div class="flex gap-5 border-t border-[#e9e9e9] bg-white py-2.5">
            <label for="timezone" class="w-[22%] shrink-0 text-right">Timezone:</label>
            <div class="relative">
              <select id="timezone" class="block h-[34px] w-[348px] appearance-none rounded-xs border border-[#66afe9] bg-white px-3 text-[#555555] shadow-[0_0_8px_#66afe999] outline-none"><option>Atlantic/Canary</option></select>
              <svg class="pointer-events-none absolute top-4 right-3 h-1 w-2" viewBox="0 0 8 4" fill="#333"><path d="M0 0h8L4 4z"/></svg>
            </div>
          </div>
          <div class="flex justify-center border-t border-[#e9e9e9] py-2.5">
            <button type="submit" class="h-[34px] rounded-xs bg-[#d94f00] px-3 text-white">Next</button>
          </div>
        </form>
      </main>
      <footer class="flex h-[58px] items-center border-t border-[#e6e6e6] bg-[#fbfbfb] px-5 pb-1 text-[11px]">
        <p><a href="#" class="text-[#d94f00]">OPNsense</a> (c) 2014-2024 <a href="#" class="text-[#d94f00]">Deciso B.V.</a></p>
      </footer>
    </div>
  </div>
</div>
</body>
</html>
